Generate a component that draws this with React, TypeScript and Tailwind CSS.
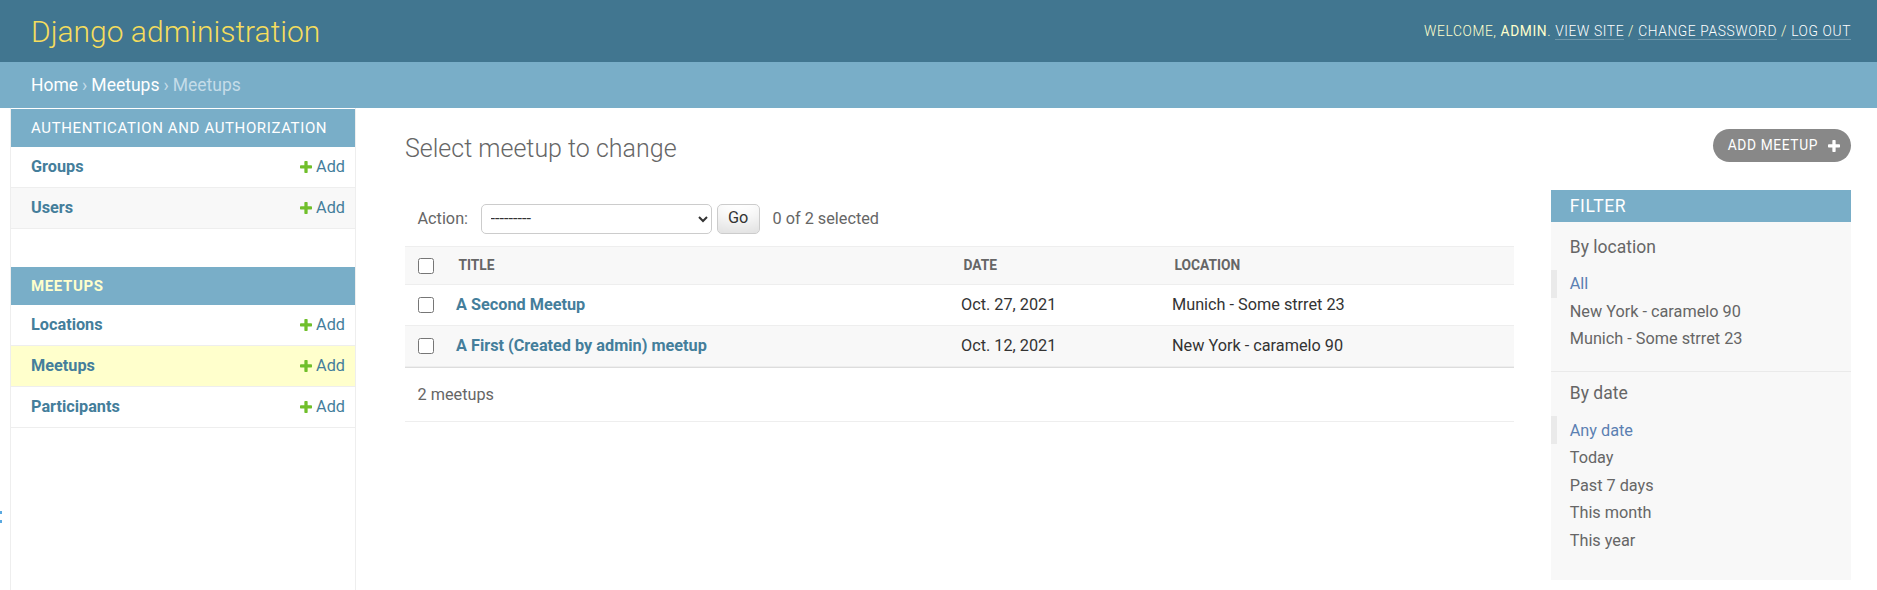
import React from 'react'

const PlusIcon = ({ color, size }: { color: string; size: number }) => (
  <svg width={size} height={size} viewBox="192 192 1408 1408" className="shrink-0">
    <path
      fill={color}
      d="M1600 796v192q0 40-28 68t-68 28h-416v416q0 40-28 68t-68 28h-192q-40 0-68-28t-28-68v-416h-416q-40 0-68-28t-28-68v-192q0-40 28-68t68-28h416v-416q0-40 28-68t68-28h192q40 0 68 28t28 68v416h416q40 0 68 28t28 68z"
    />
  </svg>
)

type Model = { name: string; current?: boolean }

const apps: { title: string; current?: boolean; models: Model[] }[] = [
  { title: 'Authentication and Authorization', models: [{ name: 'Groups' }, { name: 'Users' }] },
  {
    title: 'Meetups',
    current: true,
    models: [{ name: 'Locations' }, { name: 'Meetups', current: true }, { name: 'Participants' }],
  },
]

const rows = [
  { title: 'A Second Meetup', date: 'Oct. 27, 2021', location: 'Munich - Some strret 23' },
  { title: 'A First (Created by admin) meetup', date: 'Oct. 12, 2021', location: 'New York - caramelo 90' },
]

const filters = [
  { title: 'By location', items: ['All', 'New York - caramelo 90', 'Munich - Some strret 23'] },
  { title: 'By date', items: ['Any date', 'Today', 'Past 7 days', 'This month', 'This year'] },
]

function Sidebar() {
  return (
    <nav className="w-[345px] shrink-0 border-r border-[#eee] pt-px">
      {apps.map((app) => (
        <div key={app.title} className="mb-[38px]">
          <div
            className={
              'px-[20px] py-[10px] bg-[#79aec8] text-[15px] leading-[18px] tracking-[0.625px] uppercase whitespace-nowrap overflow-hidden ' +
              (app.current ? 'text-[#ffc] font-bold' : 'text-white')
            }
          >
            {app.title}
          </div>
          {app.models.map((m, i) => (
            <div
              key={m.name}
              className={
                'flex justify-between items-center border-b border-[#eee] py-[10px] pl-[20px] pr-[10px] text-[16.25px] leading-[20px] ' +
                (m.current ? 'bg-[#ffc]' : i % 2 === 1 ? 'bg-[#f8f8f8]' : 'bg-white')
              }
            >
              <a className="text-[#447e9b] font-bold">{m.name}</a>
              <a className="inline-flex items-center gap-[4px] text-[#447e9b]">
                <PlusIcon color="#70bf2b" size={12} />
                Add
              </a>
            </div>
          ))}
        </div>
      ))}
    </nav>
  )
}

function ChangeList() {
  return (
    <div className="flex-1 min-w-0">
      <div className="p-[12.5px] leading-[30px] flex items-center text-[16.25px] text-[#666]">
        <span>Action:</span>
        <select className="ml-[12.5px] h-[30px] w-[231px] border border-[#ccc] rounded-[5px] pl-[5px] text-[16.25px] text-[#333] bg-white">
          <option>---------</option>
        </select>
        <button className="ml-[5px] h-[30px] w-[43px] border border-[#ccc] rounded-[5px] bg-white shadow-[inset_0_-19px_25px_-12px_rgba(0,0,0,0.15)] text-[#333] text-[16.25px] leading-none">
          Go
        </button>
        <span className="ml-[13px]">0 of 2 selected</span>
      </div>
      <table className="w-full table-fixed border-collapse">
        <colgroup>
          <col className="w-[41px]" />
          <col className="w-[505px]" />
          <col className="w-[211px]" />
          <col />
        </colgroup>
        <thead>
          <tr className="bg-[#f8f8f8] border-y border-[#eee]">
            <th className="py-[10px]">
              <div className="flex justify-center items-center h-[17px]">
                <input type="checkbox" className="w-[16px] h-[16px] m-0" />
              </div>
            </th>
            {['Title', 'Date', 'Location'].map((h) => (
              <th
                key={h}
                className="px-[12.5px] py-[10px] text-left text-[13.75px] leading-[17px] font-bold uppercase text-[#666]"
              >
                {h}
              </th>
            ))}
          </tr>
        </thead>
        <tbody>
          {rows.map((r, i) => (
            <tr key={r.title} className={'border-b border-[#eee] ' + (i % 2 === 1 ? 'bg-[#f8f8f8]' : 'bg-white')}>
              <td className="py-[10px]">
                <div className="flex justify-center items-center h-[20px]">
                  <input type="checkbox" className="w-[16px] h-[16px] m-0" />
                </div>
              </td>
              <th className="p-[10px] text-left text-[16.25px] leading-[20px] font-bold text-[#447e9b]">
                <a>{r.title}</a>
              </th>
              <td className="p-[10px] text-[16.25px] leading-[20px] text-[#333]">{r.date}</td>
              <td className="p-[10px] text-[16.25px] leading-[20px] text-[#333]">{r.location}</td>
            </tr>
          ))}
        </tbody>
      </table>
      <p className="border-t border-[#ddd] border-b border-b-[#eee] py-[12.5px] pl-[12.5px] leading-[28px] text-[16.25px] text-[#666]">
        2 meetups
      </p>
    </div>
  )
}

function Filter() {
  return (
    <div className="w-[300px] shrink-0 ml-[37.5px] -mt-[1px] bg-[#f8f8f8] self-start pb-[7px]">
      <h2 className="px-[18.75px] py-[6px] bg-[#79aec8] text-white text-[17.5px] leading-[20px] tracking-[0.625px] uppercase">
        Filter
      </h2>
      {filters.map((f, fi) => (
        <div key={f.title}>
          <h3
            className={
              'px-[18.75px] mb-[12.5px] text-[17.5px] leading-[20.5px] text-[#666] ' + (fi === 0 ? 'mt-[15px]' : 'mt-[11px]')
            }
          >
            {f.title}
          </h3>
          <ul className={'px-[18.75px] pb-[18.75px] ' + (fi === 0 ? 'border-b border-[#eaeaea]' : '')}>
            {f.items.map((it, ii) => (
              <li
                key={it}
                className={
                  'py-[1.25px] text-[16.25px] leading-[25px] ' +
                  (ii === 0
                    ? 'border-l-[6px] border-[#eaeaea] pl-[12.75px] -ml-[18.75px] text-[#5b80b2]'
                    : 'text-[#666]')
                }
              >
                <a>{it}</a>
              </li>
            ))}
          </ul>
        </div>
      ))}
    </div>
  )
}

export default function App() {
  return (
    <div className="w-[1877px] h-[590px] overflow-hidden bg-white text-[#333] font-[family-name:Roboto,sans-serif] flex flex-col">
      <header className="h-[62px] shrink-0 bg-[#417690] flex items-center justify-between pl-[31px] pr-[26px]">
        <h1 className="text-[30px] leading-[35px] font-light text-[#f5dd5d]">Django administration</h1>
        <div className="text-[13.75px] leading-[20px] font-light uppercase tracking-[0.625px] text-[#ffc]">
          Welcome, <strong className="font-normal">admin</strong>.{' '}
          <a className="text-white border-b border-white/25">View site</a> /{' '}
          <a className="text-white border-b border-white/25">Change password</a> /{' '}
          <a className="text-white border-b border-white/25">Log out</a>
        </div>
      </header>
      <div className="h-[46px] shrink-0 bg-[#79aec8] flex items-center pl-[31px] text-[17.5px] text-[#c4dce8]">
        <a className="text-white">Home</a>
        <span className="mx-[4px]">›</span>
        <a className="text-white">Meetups</a>
        <span className="mx-[4px]">›</span>
        <span>Meetups</span>
      </div>
      <div className="flex flex-1 min-h-0">
        <div className="relative w-[11px] shrink-0 border-r border-[#eee]">
          <svg width="3" height="14" className="absolute left-0 top-[403px]">
            <rect x="0" y="0" width="2" height="3" fill="#5aa9e0" />
            <rect x="0" y="9" width="2" height="3" fill="#5aa9e0" />
          </svg>
        </div>
        <Sidebar />
        <div className="flex-1 min-w-0 pl-[49px] pr-[26px] pt-[26px]">
          <div className="flex items-start justify-between mb-[28px] h-[29px]">
            <h1 className="text-[25px] leading-[29px] font-light text-[#666]">Select meetup to change</h1>
            <a className="-mt-[5px] inline-flex items-center gap-[10px] h-[33px] rounded-full bg-[#888] text-white text-[13.75px] tracking-[0.625px] uppercase pl-[15px] pr-[11px]">
              Add meetup
              <PlusIcon color="#fff" size={12} />
            </a>
          </div>
          <div className="flex">
            <ChangeList />
            <Filter />
          </div>
        </div>
      </div>
    </div>
  )
}
